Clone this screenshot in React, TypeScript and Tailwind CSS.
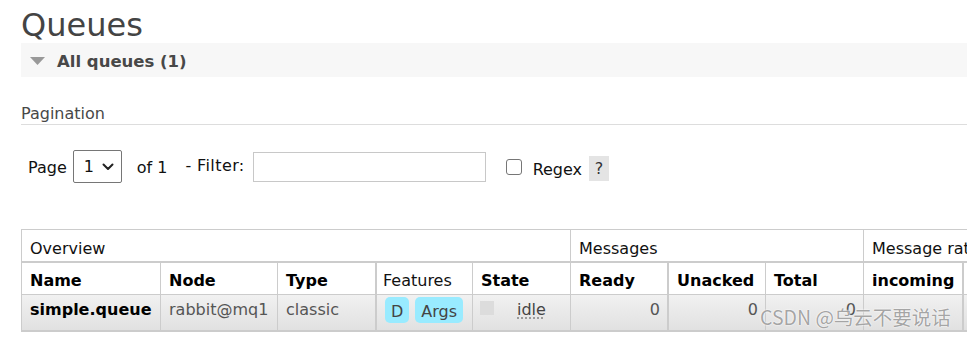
import React from "react";

function Chevron() {
  return (
    <svg width="12" height="8" viewBox="0 0 12 8" className="block">
      <polyline points="1.5,1.5 6,6 10.5,1.5" fill="none" stroke="#222" strokeWidth="2" strokeLinecap="round" strokeLinejoin="round" />
    </svg>
  );
}

export default function App() {
  return (
    <div className="relative w-[967px] h-[337px] overflow-hidden bg-white font-['DejaVu_Sans',sans-serif] text-[#222]">
      <div className="pl-[21px] w-[1200px]">
        {/* Title */}
        <h1 className="h-[43px] pt-[9px] text-[32px] leading-[32px] text-[#444] font-normal">Queues</h1>

        {/* All queues bar */}
        <div className="h-[34px] bg-[#f7f7f7] flex items-center pl-[9px]">
          <svg width="15" height="8" viewBox="0 0 15 8" className="block mt-[2px]">
            <polygon points="0,0 15,0 7.5,8" fill="#999" />
          </svg>
          <span className="ml-[12px] mt-[3px] text-[16.5px] leading-[20px] font-bold text-[#484848]">All queues (1)</span>
        </div>

        {/* Pagination heading */}
        <div className="mt-[27px] text-[16px] leading-[20px] text-[#484848] border-b border-[#ddd] w-[946px]">Pagination</div>

        {/* Pagination row */}
        <div className="mt-[25px] h-[34px] flex items-start pl-[7px] text-[16px] leading-[20px] text-[#111]">
          <span className="mt-[8px]">Page</span>
          <div className="ml-[6px] w-[49px] h-[33px] border border-[#767676] rounded-[2px] flex items-center pl-[10px]">
            <span>1</span>
            <span className="ml-[8px] mt-[1px]"><Chevron /></span>
          </div>
          <span className="ml-[15px] mt-[8px]">of 1</span>
          <span className="ml-[18px] mt-[6px] tracking-[0.4px]">- Filter:</span>
          <div className="ml-[8px] mt-[2px] w-[233px] h-[30px] border border-[#c8c8c8] bg-white" />
          <div className="ml-[20px] mt-[9px] w-[16px] h-[16px] border border-[#767676] rounded-[3px] bg-white" />
          <span className="ml-[11px] mt-[10px]">Regex</span>
          <div className="ml-[7px] mt-[6px] w-[20px] h-[25px] bg-[#e4e4e4] flex items-center justify-center text-[#333]">?</div>
        </div>

        {/* Table */}
        <div className="mt-[45px] border-t border-l border-[#ccc] text-[16px] leading-[20px] w-[1100px]">
          {/* group row */}
          <div className="h-[33px] flex border-b-2 border-[#ccc] box-border bg-white">
            <div className="w-[549px] shrink-0 border-r border-[#ccc] pl-2 pt-[9px] text-[#111]">Overview</div>
            <div className="w-[293px] shrink-0 border-r border-[#ccc] pl-2 pt-[9px] text-[#111]">Messages</div>
            <div className="w-[300px] shrink-0 pl-2 pt-[9px] text-[#111]">Message rates</div>
          </div>
          {/* header row */}
          <div className="h-[32px] flex border-b border-[#ccc] box-border bg-white font-bold text-black">
            <div className="w-[139px] shrink-0 border-r border-[#ccc] pl-2 pt-[8px]">Name</div>
            <div className="w-[117px] shrink-0 border-r border-[#ccc] pl-2 pt-[8px]">Node</div>
            <div className="w-[99px] shrink-0 border-r-2 border-[#ccc] pl-2 pt-[8px]">Type</div>
            <div className="w-[96px] shrink-0 border-r border-[#ccc] pl-[6px] pt-[8px] font-normal text-[#111]">Features</div>
            <div className="w-[98px] shrink-0 border-r border-[#ccc] pl-2 pt-[8px]">State</div>
            <div className="w-[98px] shrink-0 border-r-2 border-[#ccc] pl-2 pt-[8px]">Ready</div>
            <div className="w-[97px] shrink-0 border-r border-[#ccc] pl-2 pt-[8px]">Unacked</div>
            <div className="w-[98px] shrink-0 border-r border-[#ccc] pl-2 pt-[8px]">Total</div>
            <div className="w-[100px] shrink-0 border-r-2 border-[#ccc] pl-2 pt-[8px]">incoming</div>
            <div className="w-[100px] shrink-0 border-r border-[#ccc] pl-2 pt-[8px]">deliver / get</div>
          </div>
          {/* data row */}
          <div className="h-[37px] flex border-b-2 border-[#ccc] box-border bg-linear-to-b from-[#f1f1f1] to-[#e1e1e1] text-[#555]">
            <div className="w-[139px] shrink-0 border-r border-[#ccc] pl-2 pt-[5px] font-bold text-black">simple.queue</div>
            <div className="w-[117px] shrink-0 border-r border-[#ccc] pl-2 pt-[5px]">rabbit@mq1</div>
            <div className="w-[99px] shrink-0 border-r-2 border-[#ccc] pl-2 pt-[5px]">classic</div>
            <div className="w-[96px] shrink-0 border-r border-[#ccc] pl-2 pt-[2px] flex items-start gap-[6px] text-[#444]">
              <span className="h-[26px] px-[6px] pt-[5px] pb-[1px] rounded-[5px] bg-[#99ebff]">D</span>
              <span className="h-[26px] px-[6px] pt-[5px] pb-[1px] rounded-[5px] bg-[#99ebff]">Args</span>
            </div>
            <div className="w-[98px] shrink-0 border-r border-[#ccc] pl-[7px] flex items-start text-[#444]">
              <span className="mt-[6px] w-[14px] h-[14px] bg-[#dcdcdc]" />
              <span className="ml-[23px] mt-[5px] underline decoration-dotted decoration-[#888] underline-offset-[3px]">idle</span>
            </div>
            <div className="w-[98px] shrink-0 border-r-2 border-[#ccc] pr-[7px] pt-[5px] text-right">0</div>
            <div className="w-[97px] shrink-0 border-r border-[#ccc] pr-[7px] pt-[5px] text-right">0</div>
            <div className="w-[98px] shrink-0 border-r border-[#ccc] pr-[7px] pt-[5px] text-right">0</div>
            <div className="w-[100px] shrink-0 border-r-2 border-[#ccc] pl-2 pt-[5px]"></div>
            <div className="w-[100px] shrink-0 border-r border-[#ccc] pl-2 pt-[5px]"></div>
          </div>
        </div>
      </div>

      {/* Watermark */}
      <div className="absolute left-[760px] top-[304px] text-[19.5px] leading-[26px] text-[rgba(125,125,125,0.7)] font-['Noto_Sans_CJK_SC','DejaVu_Sans',sans-serif] [text-shadow:0_0_2px_#fff,0_0_1px_#fff] whitespace-nowrap">
        CSDN @乌云不要说话
      </div>
    </div>
  );
}
